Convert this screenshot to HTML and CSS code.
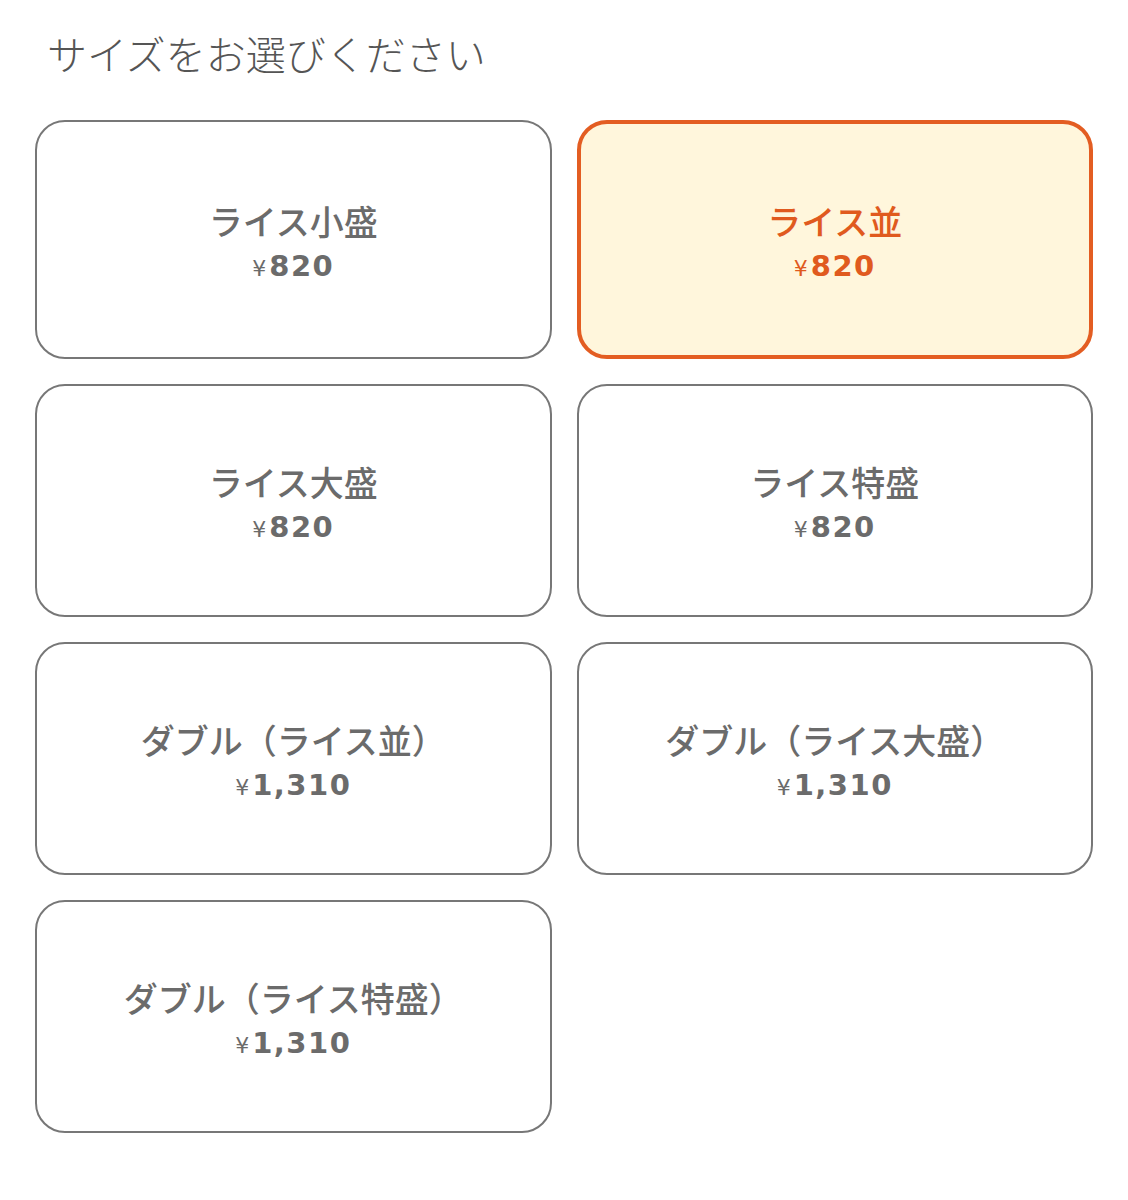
FILE: index.html
```html
<!DOCTYPE html>
<html lang="ja">
<head>
    <meta charset="utf-8">
    <meta name="viewport" content="width=device-width, initial-scale=1.0">
    <title>サイズ選択</title>
    <link rel="stylesheet" href="styles.css">
</head>
<body>
    <div class="size-picker">
        <h2 class="picker-title">サイズをお選びください</h2>

        <div class="size-grid">
            <button class="size-card">
                <span class="size-name">ライス小盛</span>
                <span class="size-price"><span class="yen">¥</span>820</span>
            </button>
            <button class="size-card selected">
                <span class="size-name">ライス並</span>
                <span class="size-price"><span class="yen">¥</span>820</span>
            </button>
            <button class="size-card">
                <span class="size-name">ライス大盛</span>
                <span class="size-price"><span class="yen">¥</span>820</span>
            </button>
            <button class="size-card">
                <span class="size-name">ライス特盛</span>
                <span class="size-price"><span class="yen">¥</span>820</span>
            </button>
            <button class="size-card">
                <span class="size-name">ダブル（ライス並）</span>
                <span class="size-price"><span class="yen">¥</span>1,310</span>
            </button>
            <button class="size-card">
                <span class="size-name">ダブル（ライス大盛）</span>
                <span class="size-price"><span class="yen">¥</span>1,310</span>
            </button>
            <button class="size-card">
                <span class="size-name">ダブル（ライス特盛）</span>
                <span class="size-price"><span class="yen">¥</span>1,310</span>
            </button>
        </div>
    </div>
</body>
</html>
```

FILE: styles.css
```css
body {
    margin: 0;
    background-color: #ffffff;
    font-family: "Noto Sans CJK JP", "Noto Sans", sans-serif;
    color: #666666;
}
.size-picker {
    padding: 25px 35px 40px;
}
.picker-title {
    margin: 0 0 39px 12px;
    font-size: 40px;
    line-height: 56px;
    font-weight: 300;
    color: #555555;
}
.size-grid {
    display: grid;
    grid-template-columns: 1fr 1fr;
    column-gap: 25px;
    row-gap: 25px;
}
.size-card {
    display: flex;
    flex-direction: column;
    align-items: center;
    justify-content: center;
    box-sizing: border-box;
    min-height: 233px;
    padding: 11px 10px 0;
    background-color: #ffffff;
    border: 2px solid #777777;
    border-radius: 30px;
    font-family: inherit;
    color: #6b6b6b;
    cursor: pointer;
}
.size-card.selected {
    min-height: 239px;
    border: 4px solid #e35d22;
    background-color: #fff6dc;
    color: #e05a1e;
}
.size-name {
    font-size: 34px;
    line-height: 44px;
    font-weight: 500;
}
.size-price {
    font-family: "DejaVu Sans", sans-serif;
    font-size: 29px;
    line-height: 46px;
    font-weight: 700;
    letter-spacing: 1.5px;
}
.yen {
    font-size: 22px;
    font-weight: 400;
    margin-right: 3px;
    letter-spacing: 0;
}
```
